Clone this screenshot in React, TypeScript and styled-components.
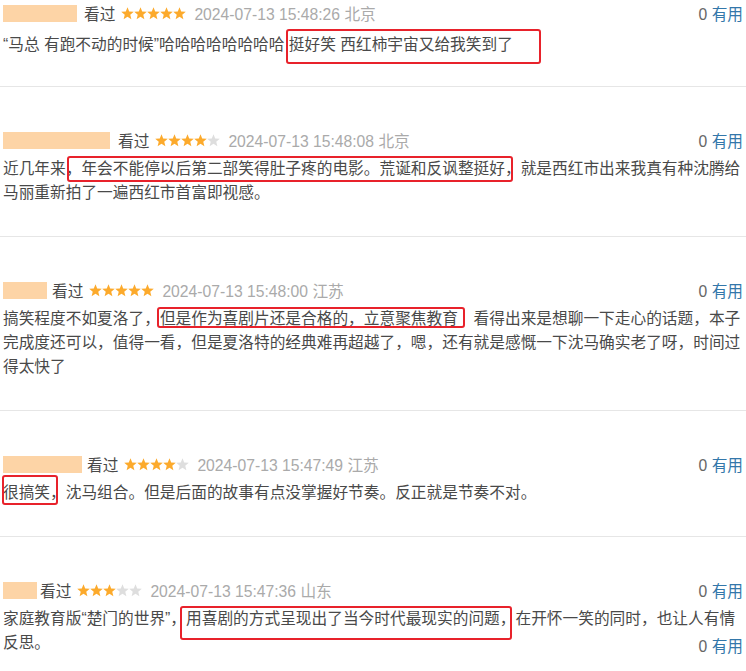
import React from 'react'
import styled, { createGlobalStyle } from 'styled-components'

const GlobalStyle = createGlobalStyle`
  body {
    margin: 0;
    background: #fff;
    font-family: "Liberation Sans", "Noto Sans CJK SC", sans-serif;
  }
`

type Box = { t: number, r: number, b: number, l: number }
type Part = string | { hl: string, box: Box }

interface Review {
  mask: number
  maskGap: number
  stars: number
  time: string
  loc: string
  parts: Part[]
  trailingUseful?: boolean
}

const reviews: Review[] = [
  {
    mask: 74, maskGap: 7, stars: 5, time: '2024-07-13 15:48:26', loc: '北京',
    parts: [
      '“马总 有跑不动的时候”哈哈哈哈哈哈哈哈 ',
      { hl: '挺好笑 西红柿宇宙又给我笑到了', box: { t: -4, r: -28, b: -7, l: -3 } }
    ]
  },
  {
    mask: 107, maskGap: 8, stars: 4, time: '2024-07-13 15:48:08', loc: '北京',
    parts: [
      '近几年来，',
      { hl: '年会不能停以后第二部笑得肚子疼的电影。荒诞和反讽整挺好', box: { t: -1, r: -8, b: -1, l: -14 } },
      '，就是西红市出来我真有种沈腾给马丽重新拍了一遍西红市首富即视感。'
    ]
  },
  {
    mask: 44, maskGap: 5, stars: 5, time: '2024-07-13 15:48:00', loc: '江苏',
    parts: [
      '搞笑程度不如夏洛了，',
      { hl: '但是作为喜剧片还是合格的，立意聚焦教育', box: { t: 0, r: -7, b: 3, l: -3 } },
      '\u3000看得出来是想聊一下走心的话题，本子完成度还可以，值得一看，但是夏洛特的经典难再超越了，嗯，还有就是感慨一下沈马确实老了呀，时间过得太快了'
    ]
  },
  {
    mask: 79, maskGap: 5, stars: 4, time: '2024-07-13 15:47:49', loc: '江苏',
    parts: [
      { hl: '很搞笑', box: { t: -6, r: -8, b: 0, l: -1 } },
      '，沈马组合。但是后面的故事有点没掌握好节奏。反正就是节奏不对。'
    ]
  },
  {
    mask: 34, maskGap: 3, stars: 3, time: '2024-07-13 15:47:36', loc: '山东',
    parts: [
      '家庭教育版“楚门的世界”，',
      { hl: '用喜剧的方式呈现出了当今时代最现实的问题，', box: { t: -1, r: 3, b: -9, l: -6 } },
      '在开怀一笑的同时，也让人有情反思。'
    ],
    trailingUseful: true
  }
]

const Page = styled.div`
  width: 746px;
  color: #494949;
  font-size: 15.7px;
`

const Item = styled.div<{ $first?: boolean, $last?: boolean }>`
  padding: ${p => (p.$first ? '3px' : '43px')} 3px ${p => (p.$first ? '29px' : '31px')};
  border-bottom: ${p => (p.$last ? 'none' : '1px solid #e6e6e6')};
`

const Meta = styled.div`
  display: flex;
  align-items: center;
  height: 20px;
  white-space: nowrap;
`

const Mask = styled.span<{ $w: number, $gap: number }>`
  display: block;
  width: ${p => p.$w}px;
  height: 17px;
  margin-right: ${p => p.$gap}px;
  background: #fdd4a6;
`

const Watched = styled.span`
  color: #494949;
  margin-right: 6px;
`

const Stars = styled.span`
  display: flex;
  margin-right: 8px;
`

const StarIcon = styled.svg<{ $on: boolean }>`
  width: 13px;
  height: 13px;
  fill: ${p => (p.$on ? '#fcaa2c' : '#dedede')};
`

const Time = styled.span`
  color: #aaa;
`

const Useful = styled.span`
  margin-left: auto;
  color: #666;
  white-space: nowrap;
`

const UsefulLink = styled.span`
  color: #3377aa;
`

const FloatUseful = styled(Useful)`
  float: right;
  margin-top: 4px;
`

const Text = styled.div<{ $first?: boolean }>`
  margin-top: ${p => (p.$first ? '10px' : '7px')};
  line-height: 24px;
`

const Mark = styled.span<{ $box: Box }>`
  display: inline-block;
  position: relative;
  line-height: 24px;
  &::after {
    content: '';
    position: absolute;
    top: ${p => p.$box.t}px;
    right: ${p => p.$box.r}px;
    bottom: ${p => p.$box.b}px;
    left: ${p => p.$box.l}px;
    border: 2px solid #e8222b;
    border-radius: 3px;
    pointer-events: none;
  }
`

const Star = ({ on }: { on: boolean }) => (
  <StarIcon $on={on} viewBox='0 0 13 13'>
    <polygon points='6.5,0.2 8.2,4.45 12.78,4.76 9.26,7.7 10.38,12.14 6.5,9.7 2.62,12.14 3.74,7.7 0.22,4.76 4.8,4.45' />
  </StarIcon>
)

const UsefulCount = () => (
  <>0 <UsefulLink>有用</UsefulLink></>
)

const App: React.FC = () => (
  <Page>
    <GlobalStyle />
    {reviews.map((r, i) => (
      <Item key={r.time} $first={i === 0} $last={i === reviews.length - 1}>
        <Meta>
          <Mask $w={r.mask} $gap={r.maskGap} />
          <Watched>看过</Watched>
          <Stars>
            {[0, 1, 2, 3, 4].map(n => <Star key={n} on={n < r.stars} />)}
          </Stars>
          <Time>{r.time} {r.loc}</Time>
          <Useful><UsefulCount /></Useful>
        </Meta>
        <Text $first={i === 0}>
          {r.parts.map((p, j) =>
            typeof p === 'string'
              ? <React.Fragment key={j}>{p}</React.Fragment>
              : <Mark key={j} $box={p.box}>{p.hl}</Mark>
          )}
          {r.trailingUseful && <FloatUseful><UsefulCount /></FloatUseful>}
        </Text>
      </Item>
    ))}
  </Page>
)

export default App
